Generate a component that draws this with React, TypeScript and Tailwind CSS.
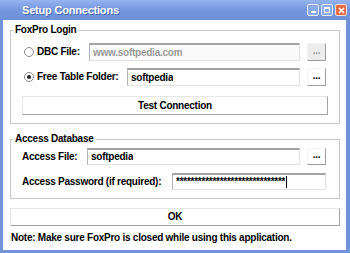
import React from "react";

const font = "font-['Liberation_Sans',Arial,sans-serif] font-bold tracking-[-0.25px]";

function Radio({ checked }: { checked?: boolean }) {
  return (
    <span className="ml-[1px] mr-[3px] flex h-[10px] w-[10px] shrink-0 items-center justify-center rounded-full border border-[#8a8a8a] bg-white">
      {checked ? <span className="h-[4px] w-[4px] rounded-full bg-[#222]" /> : null}
    </span>
  );
}

function TextBox({
  value,
  disabled,
  caret,
  className = "",
}: {
  value: string;
  disabled?: boolean;
  caret?: boolean;
  className?: string;
}) {
  return (
    <div
      className={`flex h-full min-w-0 flex-1 items-center border-t-2 border-l border-r border-b border-t-[#a4a4a4] border-l-[#b4b4b4] border-r-[#e2e2e2] border-b-[#e2e2e2] pl-[3px] ${
        disabled ? "bg-[#fafafa] text-[#9a9a9a]" : "bg-white text-black"
      } ${className}`}
    >
      <span className="overflow-hidden whitespace-nowrap">{value}</span>
      {caret ? <span className="ml-[1px] h-[12px] w-[1px] shrink-0 bg-black" /> : null}
    </div>
  );
}

function DotsButton({ disabled }: { disabled?: boolean }) {
  return (
    <div
      className={`ml-[7px] mr-[2px] flex h-full w-[19px] shrink-0 items-center justify-center border border-t-[#f4f4f4] border-l-[#f4f4f4] border-r-[#9c9c9c] border-b-[#9c9c9c] pb-[3px] ${
        disabled ? "bg-[#ececec] text-[#9a9a9a]" : "bg-white text-black"
      }`}
    >
      ...
    </div>
  );
}

function PushButton({ label, className = "" }: { label: string; className?: string }) {
  return (
    <div
      className={`flex items-center justify-center border border-t-[#e6e6e6] border-l-[#e6e6e6] border-r-[#a2a2a2] border-b-[#a2a2a2] bg-white text-black ${className}`}
    >
      {label}
    </div>
  );
}

export default function App() {
  return (
    <div className={`flex h-[253px] w-[350px] flex-col bg-[#7193dc] text-[10px] leading-[12px] text-black ${font}`}>
      <div className="flex h-[20px] shrink-0 items-center bg-gradient-to-b from-[#95b3f0] via-[#7597df] to-[#6e90da] pl-[22px] pr-[3px]">
        <span className="flex-1 text-[11px] tracking-[-0.2px] text-white [text-shadow:1px_1px_0_#4a68b0]">
          Setup Connections
        </span>
        <div className="flex gap-[2px]">
          <div className="flex h-[12px] w-[12px] items-end justify-center rounded-[2px] border border-[#e6eefc] bg-[#8aa9e8] pb-[2px]">
            <span className="h-[2px] w-[5px] bg-white" />
          </div>
          <div className="flex h-[12px] w-[12px] items-center justify-center rounded-[2px] border border-[#e6eefc] bg-[#8aa9e8]">
            <span className="h-[6px] w-[6px] border border-t-2 border-white" />
          </div>
          <div className="flex h-[12px] w-[12px] items-center justify-center rounded-[2px] border border-[#fbe2d6] bg-[#e56a43]">
            <svg width="7" height="7" viewBox="0 0 7 7">
              <path d="M1 1L6 6M6 1L1 6" stroke="white" strokeWidth="1.6" />
            </svg>
          </div>
        </div>
      </div>

      <div className="ml-[3px] mr-[4px] mb-[3px] flex flex-1 flex-col bg-white pl-[7px] pr-[6px]">
        <fieldset className="mt-[4px] border border-[#c9c9c9] pl-[2px] pr-[11px] pb-[8px]">
          <legend className="px-[2px] leading-[12px]">FoxPro Login</legend>
          <div className="flex flex-col pl-[10px]">
            <div className="mt-[7px] flex h-[18px] items-center">
              <Radio />
              <span className="w-[52px] shrink-0">DBC File:</span>
              <TextBox value="www.softpedia.com" disabled />
              <DotsButton disabled />
            </div>
            <div className="mt-[7px] flex h-[18px] items-center">
              <Radio checked />
              <span className="w-[90px] shrink-0">Free Table Folder:</span>
              <TextBox value="softpedia" />
              <DotsButton />
            </div>
            <PushButton label="Test Connection" className="ml-[-1px] mt-[10px] h-[19px]" />
          </div>
        </fieldset>

        <fieldset className="mt-[9px] border border-[#c9c9c9] pl-[2px] pr-[11px] pb-[8px]">
          <legend className="px-[2px] leading-[12px]">Access Database</legend>
          <div className="flex flex-col pl-[9px]">
            <div className="mt-[3px] flex h-[17px] items-center">
              <span className="w-[65px] shrink-0">Access File:</span>
              <TextBox value="softpedia" />
              <DotsButton />
            </div>
            <div className="mt-[8px] flex h-[17px] items-center">
              <span className="w-[150px] shrink-0">Access Password (if required):</span>
              <TextBox value="******************************" caret className="mr-[2px]" />
            </div>
          </div>
        </fieldset>

        <PushButton label="OK" className="mt-[9px] h-[18px]" />
        <p className="mt-[6px] pl-[1px] leading-[12px]">
          Note: Make sure FoxPro is closed while using this application.
        </p>
      </div>
    </div>
  );
}
